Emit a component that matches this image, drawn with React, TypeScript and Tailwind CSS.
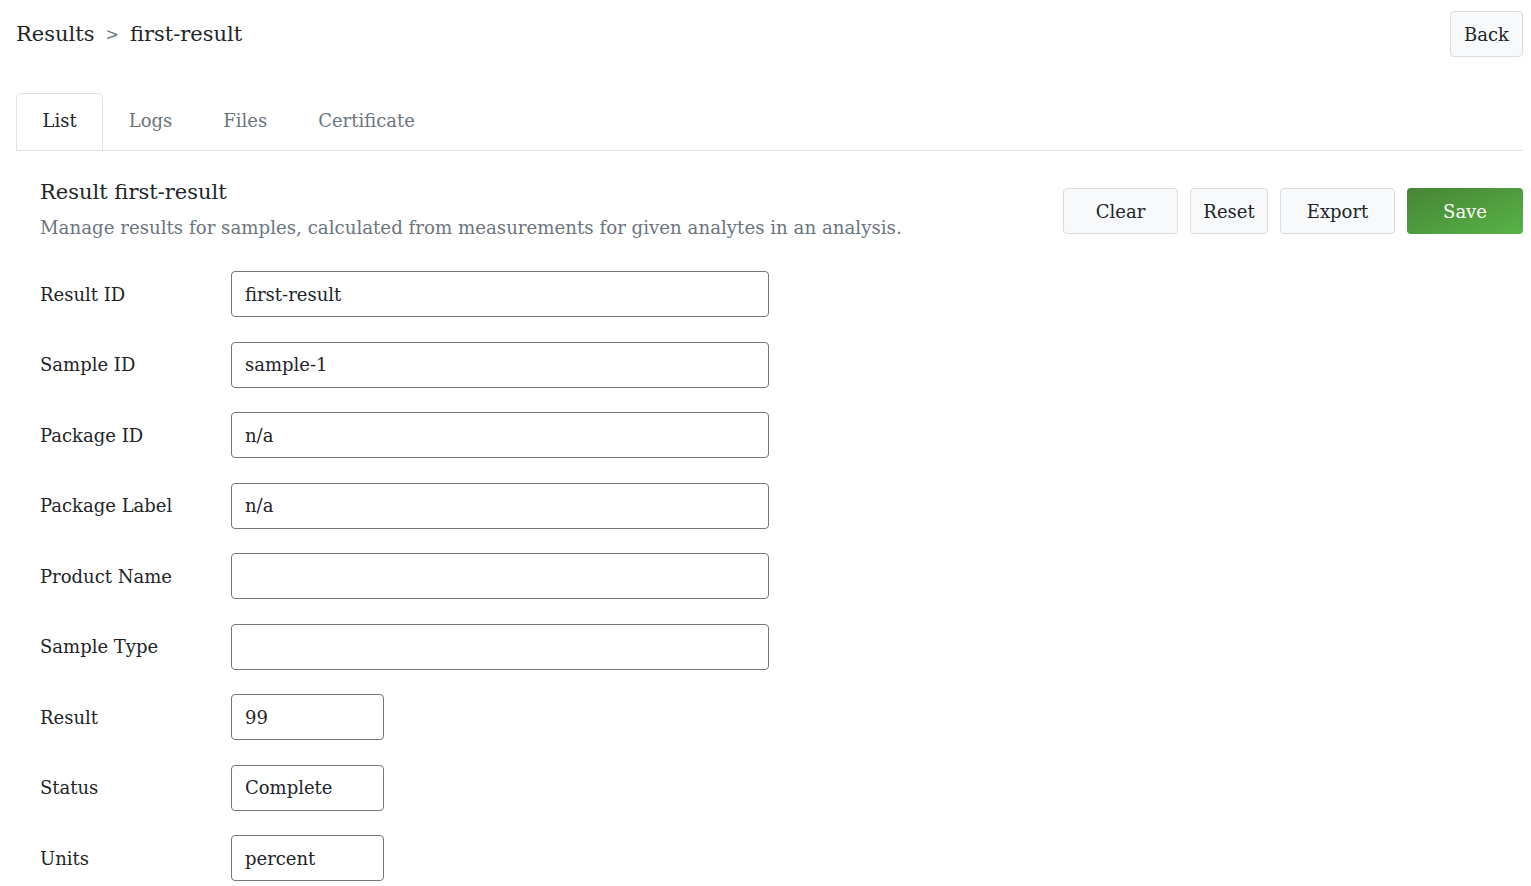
const fields: { label: string; value: string; short?: boolean }[] = [
  { label: "Result ID", value: "first-result" },
  { label: "Sample ID", value: "sample-1" },
  { label: "Package ID", value: "n/a" },
  { label: "Package Label", value: "n/a" },
  { label: "Product Name", value: "" },
  { label: "Sample Type", value: "" },
  { label: "Result", value: "99", short: true },
  { label: "Status", value: "Complete", short: true },
  { label: "Units", value: "percent", short: true },
];

const tabs = ["List", "Logs", "Files", "Certificate"];

const btn =
  "h-[46px] rounded-[4px] border border-[#dadce0] bg-[#f8f9fa] text-[#212529] text-[18px]";

export default function App() {
  return (
    <div
      className="min-h-screen bg-white text-[#212529] pl-4 pr-2"
      style={{ fontFamily: '"DejaVu Serif", "Liberation Serif", serif' }}
    >
      {/* header */}
      <div className="flex items-start justify-between pt-[11px]">
        <div className="flex items-center gap-[11px] pt-[13px] text-[21px] leading-none">
          <span>Results</span>
          <span className="text-[#6c757d] text-[16px]">&gt;</span>
          <span>first-result</span>
        </div>
        <button className={`${btn} px-[13px]`}>Back</button>
      </div>

      {/* tabs */}
      <div className="mt-[36px] flex border-b border-[#dee2e6]">
        {tabs.map((t, i) => (
          <div
            key={t}
            className={
              i === 0
                ? "-mb-px h-[57px] flex items-center px-[25.5px] border border-[#dee2e6] border-b-white rounded-t-[5px] bg-white text-[18px] text-[#212529]"
                : "h-[57px] flex items-center px-[25.5px] text-[18px] text-[#6c757d]"
            }
          >
            <span className="-mt-[2px]">{t}</span>
          </div>
        ))}
      </div>

      {/* section */}
      <div className="pl-6 pt-[26px]">
        <div className="flex items-start justify-between">
          <div>
            <h1 className="text-[21px] leading-[30px]">Result first-result</h1>
            <p className="mt-[7px] text-[18.2px] text-[#6c757d]">
              Manage results for samples, calculated from measurements for given
              analytes in an analysis.
            </p>
          </div>
          <div className="flex gap-3 pt-[11px]">
            <button className={`${btn} w-[115px]`}>Clear</button>
            <button className={`${btn} w-[78px]`}>Reset</button>
            <button className={`${btn} w-[115px]`}>Export</button>
            <button className="h-[46px] w-[116px] rounded-[4px] bg-gradient-to-br from-[#478535] to-[#57b347] text-white text-[18px]">
              Save
            </button>
          </div>
        </div>

        <div className="mt-[30px] flex flex-col gap-[24.5px]">
          {fields.map((f) => (
            <div key={f.label} className="flex items-center">
              <label className="w-[191px] text-[18px]">{f.label}</label>
              <input
                readOnly
                value={f.value}
                className={`${
                  f.short ? "w-[153px]" : "w-[538px]"
                } h-[46px] rounded-[4px] border border-[#767676] px-[13px] text-[18px] text-[#212529] outline-none`}
                style={{ fontFamily: "inherit" }}
              />
            </div>
          ))}
        </div>
      </div>
    </div>
  );
}
